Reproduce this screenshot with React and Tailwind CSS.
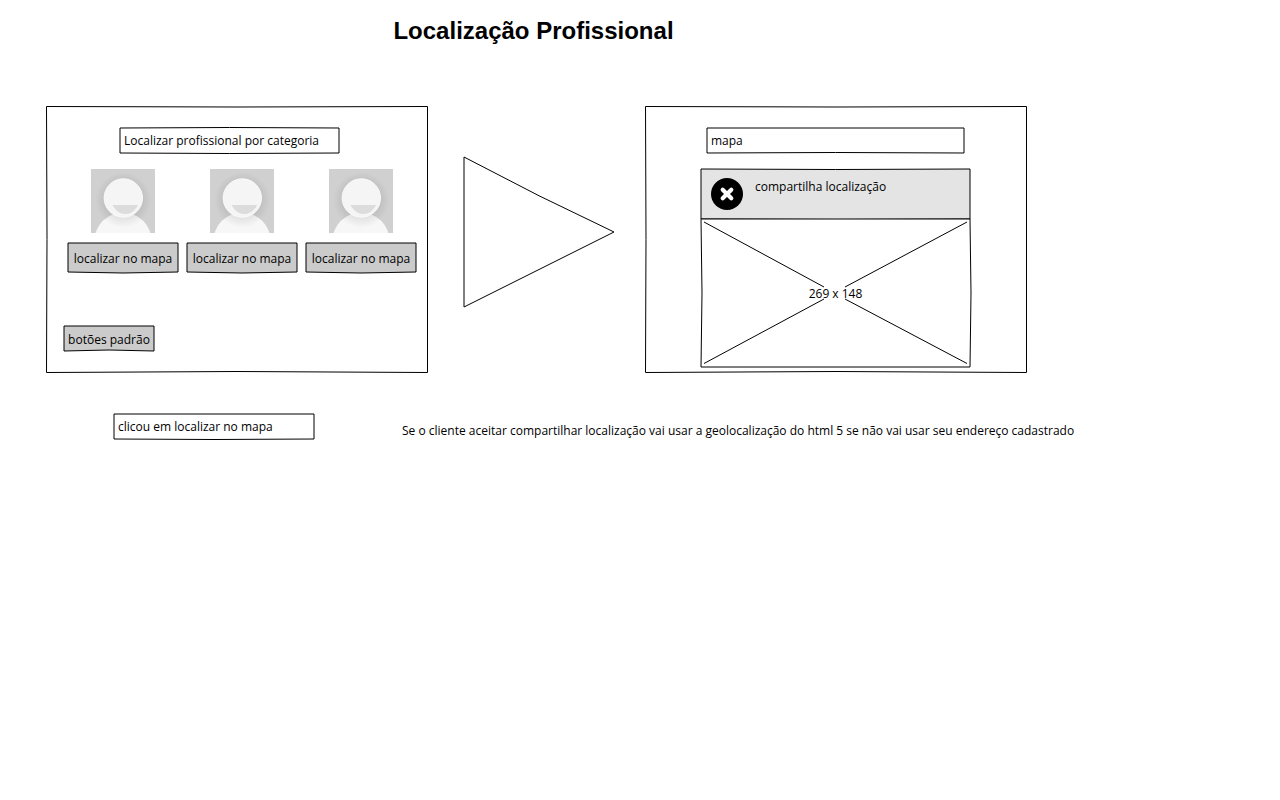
import { useId } from "react";

function Outline({ w, h, inset = 0, top = 0, right = 0, bottom = 0, left = 0, fill = "white" }) {
  const x0 = inset;
  const y0 = inset;
  const x1 = w - inset;
  const y1 = h - inset;
  const d = [
    `M${x0} ${y0}`,
    `Q${w / 2} ${y0 + top * 2} ${x1} ${y0}`,
    `Q${x1 + right * 2} ${h / 2} ${x1} ${y1}`,
    `Q${w / 2} ${y1 + bottom * 2} ${x0} ${y1}`,
    `Q${x0 + left * 2} ${h / 2} ${x0} ${y0}Z`,
  ].join(" ");
  return (
    <svg
      aria-hidden="true"
      viewBox={`0 0 ${w} ${h}`}
      preserveAspectRatio="none"
      className="pointer-events-none absolute inset-0 -z-10 h-full w-full overflow-visible"
    >
      <path d={d} fill={fill} stroke="black" strokeWidth="1" vectorEffect="non-scaling-stroke" />
    </svg>
  );
}

function Field({ label, value, w, className, top = 0, bottom = 0 }) {
  return (
    <div className={`relative isolate h-[25px] ${className}`}>
      <Outline w={w} h={25} top={top} bottom={bottom} />
      <input
        type="text"
        aria-label={label}
        defaultValue={value}
        className="block h-full w-full bg-transparent px-1 text-black outline-none"
      />
    </div>
  );
}

function SketchButton({ children, w, h, className, bottom }) {
  return (
    <button type="button" className={`relative isolate block cursor-pointer pt-0.5 text-center ${className}`}>
      <Outline w={w} h={h} bottom={bottom} fill="#cbcbcb" />
      {children}
    </button>
  );
}

function Avatar() {
  const id = useId();
  return (
    <svg viewBox="0 0 64 64" className="size-16" role="img" aria-label="Profissional">
      <defs>
        <radialGradient id={id} gradientUnits="userSpaceOnUse" cx="32.3" cy="31" r="28">
          <stop offset="0.65" stopColor="black" stopOpacity="0.08" />
          <stop offset="1" stopColor="black" stopOpacity="0" />
        </radialGradient>
      </defs>
      <rect width="64" height="64" fill="#d0d0d0" />
      <circle cx="32" cy="72" r="28.5" fill="#f7f7f7" />
      <circle cx="32.3" cy="31" r="28" fill={`url(#${id})`} />
      <circle cx="32.3" cy="29" r="19.2" fill="#f5f5f5" stroke="#fafafa" />
      <path d="M21.5 36H47.2C44 41.8 39.5 45 34.4 45S24.5 41.8 21.5 36Z" fill="#dcdcdc" />
    </svg>
  );
}

function Professional() {
  return (
    <li className="flex flex-col items-center gap-[10px]">
      <Avatar />
      <SketchButton w={109} h={29} bottom={1} className="h-[29px] w-[110px]">
        localizar no mapa
      </SketchButton>
    </li>
  );
}

function CloseIcon() {
  return (
    <svg viewBox="0 0 32 32" className="size-8" aria-hidden="true">
      <circle cx="16" cy="16" r="16" fill="black" />
      <path d="M11.7 11.7L20.3 20.3M20.3 11.7L11.7 20.3" stroke="white" strokeWidth="4.2" strokeLinecap="round" />
    </svg>
  );
}

export default function App() {
  return (
    <main className="min-h-screen bg-white pt-4 font-['Comic_Sans_MS','Open_Sans',sans-serif] text-[12px] leading-4 text-black">
      <div className="pr-[253px] pl-[46px]">
        <h1 className="pr-[6px] text-center font-['Liberation_Sans',Arial,sans-serif] text-2xl leading-[30px] font-bold">
          Localização Profissional
        </h1>
        <div className="mt-[60px] grid grid-cols-[1fr_auto_1fr] items-start">
          <section className="relative isolate min-w-0 py-[22px]">
            <Outline w={382} h={267} inset={0.5} top={0.5} bottom={-1} left={0.5} />
            <Field
              label="Categoria"
              value="Localizar profissional por categoria"
              w={219}
              top={-0.5}
              bottom={0.5}
              className="ml-[74px] w-[219px]"
            />
            <ul className="mt-4 flex justify-center gap-[9px] pl-[10px]">
              <Professional />
              <Professional />
              <Professional />
            </ul>
            <SketchButton w={90} h={25} bottom={-1} className="mt-[54px] ml-[18px] h-[25px] w-[90px]">
              botões padrão
            </SketchButton>
          </section>

          <svg viewBox="0 0 150 150" className="mt-[51px] mr-[31px] ml-9 size-[150px] shrink-0 overflow-visible" aria-hidden="true">
            <path d="M0 0Q75 40 150 75L0 150Z" fill="white" stroke="black" />
          </svg>

          <section className="relative isolate flex min-w-0 flex-col items-center pt-[22px] pr-px pb-[6px]">
            <Outline w={382} h={267} inset={0.5} top={0.5} bottom={-1} left={0.5} />
            <Field label="Mapa" value="mapa" w={257} bottom={-0.5} className="w-[257px]" />
            <div className="mt-4 w-[269px]">
              <div className="relative isolate flex h-[50px] items-start gap-3 pt-[9px] pl-[10px]">
                <Outline w={269} h={50} top={0.5} bottom={0.5} fill="#e4e4e4" />
                <button type="button" aria-label="Fechar" className="cursor-pointer">
                  <CloseIcon />
                </button>
                <p className="pt-px">compartilha localização</p>
              </div>
              <div className="relative isolate flex h-[148px] items-center justify-center pt-0.5">
                <Outline w={269} h={148} left={1} right={1} />
                <svg viewBox="0 0 269 148" preserveAspectRatio="none" className="absolute inset-0 h-full w-full" aria-hidden="true">
                  <path
                    d="M3 3L123 68M266 3L144 68M3 144.5L123 80M266 144.5L144 80"
                    stroke="black"
                    fill="none"
                  />
                </svg>
                <span className="relative">269 x 148</span>
              </div>
            </div>
          </section>
        </div>
      </div>

      <div className="mt-[41px] flex items-start gap-[88px] pl-[114px]">
        <Field label="Ação" value="clicou em localizar no mapa" w={200} bottom={0.5} className="w-[200px] shrink-0" />
        <p className="mt-[9px] whitespace-nowrap">
          Se o cliente aceitar compartilhar localização vai usar a geolocalização do html 5 se não vai usar seu endereço
          cadastrado
        </p>
      </div>
    </main>
  );
}
